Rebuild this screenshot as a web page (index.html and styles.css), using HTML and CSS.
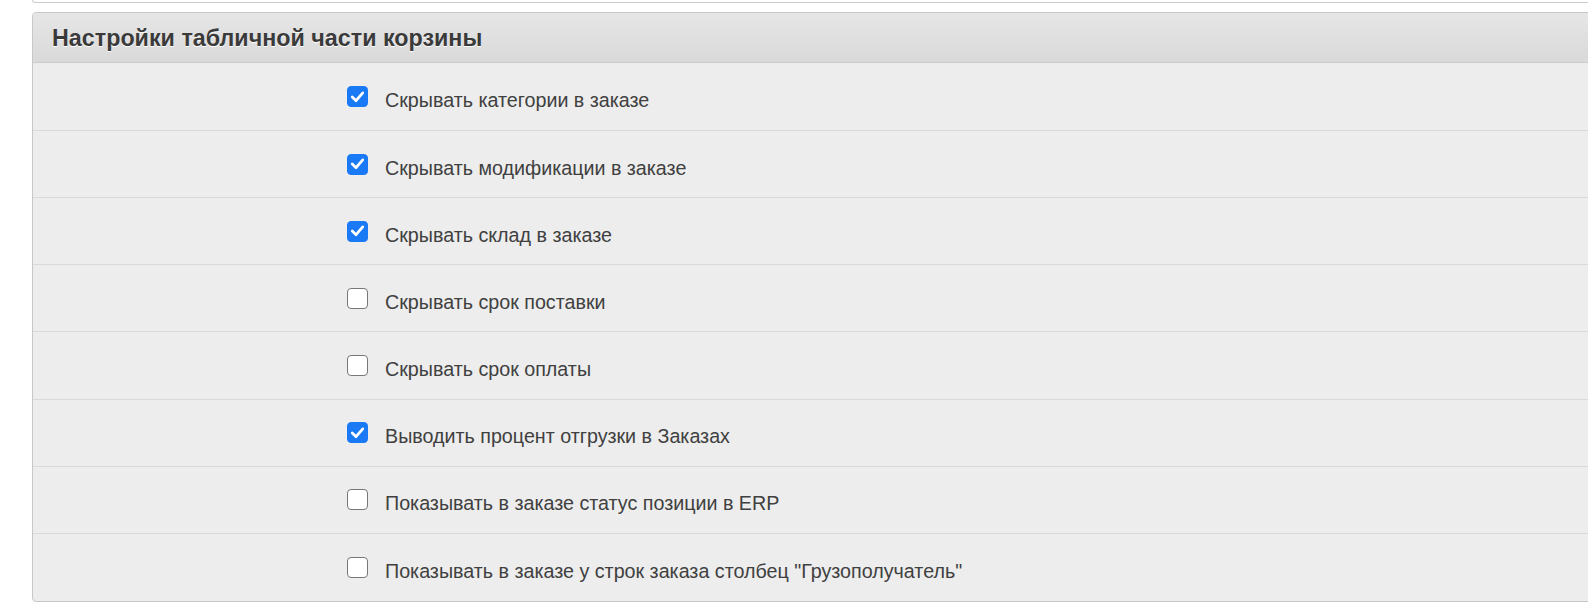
FILE: index.html
```html
<!DOCTYPE html>
<html lang="ru">
<head>
<meta charset="utf-8">
<title>Настройки табличной части корзины</title>
<link rel="stylesheet" href="styles.css">
</head>
<body>
<div class="page">
  <div class="prev-panel"></div>
  <section class="panel">
    <header class="panel-head">Настройки табличной части корзины</header>
    <div class="row"><span class="lbl"></span><label class="opt"><span class="box checked"><svg viewBox="0 0 20 20"><path d="M5 10.5 L8.6 14 L15 6.5"/></svg></span><span class="txt">Скрывать категории в заказе</span></label></div>
    <div class="row"><span class="lbl"></span><label class="opt"><span class="box checked"><svg viewBox="0 0 20 20"><path d="M5 10.5 L8.6 14 L15 6.5"/></svg></span><span class="txt">Скрывать модификации в заказе</span></label></div>
    <div class="row"><span class="lbl"></span><label class="opt"><span class="box checked"><svg viewBox="0 0 20 20"><path d="M5 10.5 L8.6 14 L15 6.5"/></svg></span><span class="txt">Скрывать склад в заказе</span></label></div>
    <div class="row"><span class="lbl"></span><label class="opt"><span class="box"></span><span class="txt">Скрывать срок поставки</span></label></div>
    <div class="row"><span class="lbl"></span><label class="opt"><span class="box"></span><span class="txt">Скрывать срок оплаты</span></label></div>
    <div class="row"><span class="lbl"></span><label class="opt"><span class="box checked"><svg viewBox="0 0 20 20"><path d="M5 10.5 L8.6 14 L15 6.5"/></svg></span><span class="txt">Выводить процент отгрузки в Заказах</span></label></div>
    <div class="row"><span class="lbl"></span><label class="opt"><span class="box"></span><span class="txt">Показывать в заказе статус позиции в ERP</span></label></div>
    <div class="row last"><span class="lbl"></span><label class="opt"><span class="box"></span><span class="txt">Показывать в заказе у строк заказа столбец "Грузополучатель"</span></label></div>
  </section>
</div>
</body>
</html>
```
FILE: styles.css
```css
html, body {
  margin: 0;
  padding: 0;
  background: #ffffff;
  overflow: hidden;
}
body {
  font-family: "Liberation Sans", Arial, Helvetica, sans-serif;
  color: #444444;
}
.page {
  padding-left: 32px;
  margin-right: -20px;
}
.prev-panel {
  height: 2px;
  border: 1px solid #cccccc;
  border-top: none;
  border-radius: 0 0 4px 4px;
  background: #ffffff;
}
.panel {
  margin-top: 9px;
  border: 1px solid #c8c8c8;
  border-radius: 4px;
  background: #ededed;
  overflow: hidden;
}
.panel-head {
  height: 50px;
  box-sizing: border-box;
  padding: 2px 0 0 19px;
  display: flex;
  align-items: center;
  font-size: 23.3px;
  font-weight: bold;
  color: #3a3a3a;
  text-shadow: 0 1px 0 #ffffff;
  background: linear-gradient(#e6e6e6, #d9d9d9);
  border-bottom: 1px solid #cccccc;
}
.row {
  display: grid;
  grid-template-columns: 314px 1fr;
  height: 67.15px;
  box-sizing: border-box;
  border-bottom: 1px solid #d9d9d9;
  align-items: center;
}
.row:first-of-type { height: 68px; }
.row.last { border-bottom: none; }
.opt {
  display: flex;
  align-items: center;
  gap: 17px;
  font-size: 19.7px;
  color: #404040;
}
.txt {
  margin-top: 8px;
}
.box {
  width: 21px;
  height: 21px;
  box-sizing: border-box;
  border: 1.5px solid #777777;
  border-radius: 4px;
  background: #ffffff;
  display: flex;
  flex: none;
}
.box.checked {
  background: #1a7af5;
  border-color: #1a7af5;
}
.box svg {
  width: 21px;
  height: 21px;
  margin: -1.5px;
}
.box path {
  fill: none;
  stroke: #ffffff;
  stroke-width: 2.6;
  stroke-linecap: round;
  stroke-linejoin: round;
}
```
